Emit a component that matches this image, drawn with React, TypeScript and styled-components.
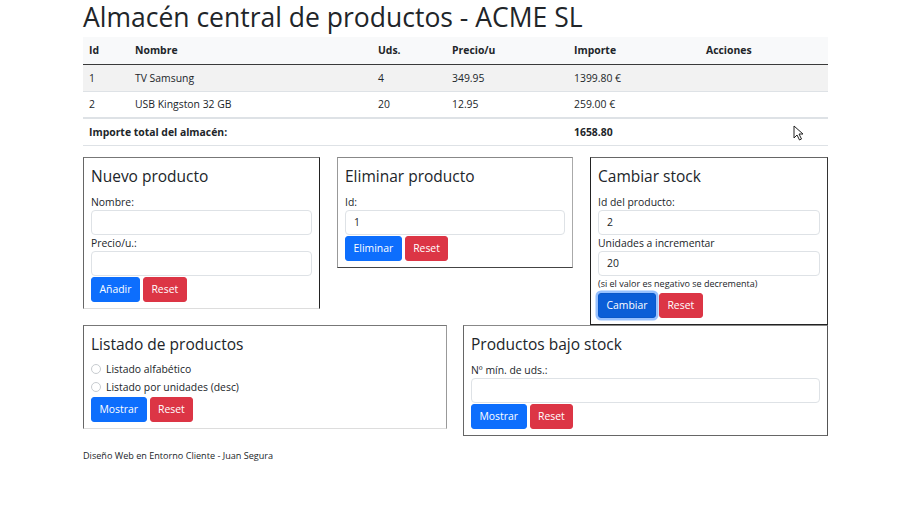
import React from "react";
import styled, { createGlobalStyle } from "styled-components";

const Global = createGlobalStyle`
  html, body { margin: 0; padding: 0; background: #fff; }
  body {
    font-family: "Open Sans", "Noto Sans", sans-serif;
    color: #212529;
    font-size: 10.4px;
  }
  * { box-sizing: border-box; }
`;

const Page = styled.div`
  width: 745px;
  margin: 0 auto;
  position: relative;
`;

const Title = styled.h1`
  font-size: 26.5px;
  font-weight: 500;
  line-height: 32px;
  margin: 1px 0 4px;
  color: #212529;
`;

const TableWrap = styled.div`
  position: relative;
  margin-bottom: 11px;
`;

const Table = styled.table`
  width: 745px;
  border-collapse: collapse;
  table-layout: fixed;
  font-size: 10.4px;
`;

const Th = styled.th`
  height: 27px;
  padding: 0 6px;
  text-align: left;
  font-weight: 700;
  background: #f8f9fa;
  border-bottom: 1px solid #3a3a3a;
`;

const Td = styled.td<{ $bold?: boolean; $striped?: boolean; $thick?: boolean }>`
  height: 27px;
  padding: 0 6px;
  text-align: left;
  font-weight: ${(p) => (p.$bold ? 700 : 400)};
  background: ${(p) => (p.$striped ? "#f2f2f2" : "transparent")};
  border-bottom: ${(p) => (p.$thick ? "2px solid #dee2e6" : "1px solid #dee2e6")};
`;

const Cursor = styled.svg`
  position: absolute;
  left: 710px;
  top: 88px;
`;

const RowOne = styled.div`
  display: grid;
  grid-template-columns: 237px 236px 238px;
  column-gap: 17px;
  align-items: start;
`;

const RowTwo = styled.div`
  display: grid;
  grid-template-columns: 364px 365px;
  column-gap: 16px;
  align-items: start;
`;

const Box = styled.section<{ $edges: string }>`
  border-style: solid;
  border-width: 1px;
  border-color: ${(p) => p.$edges};
  padding: 6px 7px 6px;
`;

const BoxTitle = styled.h5`
  font-size: 15.5px;
  font-weight: 400;
  line-height: 19px;
  margin: 3px 0 8px;
`;

const Label = styled.label`
  display: block;
  line-height: 16px;
  font-size: 10.4px;
`;

const Input = styled.div`
  height: 25px;
  border: 1px solid #dee2e6;
  border-radius: 4px;
  padding: 0 8px;
  display: flex;
  align-items: center;
  font-size: 10.4px;
  background: #fff;
`;

const Note = styled.div`
  font-size: 9px;
  line-height: 16px;
`;

const Buttons = styled.div`
  display: flex;
  gap: 3px;
  margin-top: 1px;
`;

const Button = styled.button<{ $variant: "primary" | "danger" | "active" }>`
  height: 25px;
  padding: 0 7.5px;
  border-radius: 3px;
  font-family: inherit;
  font-size: 10.4px;
  color: #fff;
  border: 1px solid
    ${(p) => (p.$variant === "danger" ? "#dc3545" : p.$variant === "active" ? "#0a58ca" : "#0d6efd")};
  background: ${(p) => (p.$variant === "danger" ? "#dc3545" : p.$variant === "active" ? "#0b5ed7" : "#0d6efd")};
  box-shadow: ${(p) => (p.$variant === "active" ? "0 0 0 2.5px rgba(49,132,253,0.5)" : "none")};
`;

const RadioList = styled.div`
  margin-top: -2px;
`;

const RadioRow = styled.label`
  display: flex;
  align-items: center;
  gap: 5px;
  height: 18px;
  font-size: 10.4px;
`;

const RadioDot = styled.span`
  width: 10px;
  height: 10px;
  border-radius: 50%;
  border: 1px solid #c8ccd0;
  background: #fff;
`;

const Footer = styled.footer`
  font-size: 9.1px;
  line-height: 14px;
  margin-top: 13px;
`;

export default function App() {
  return (
    <>
      <Global />
      <Page>
        <Title>Almacén central de productos - ACME SL</Title>
        <TableWrap>
          <Table>
            <colgroup>
              <col style={{ width: 46 }} />
              <col style={{ width: 243 }} />
              <col style={{ width: 74 }} />
              <col style={{ width: 122 }} />
              <col style={{ width: 132 }} />
              <col style={{ width: 128 }} />
            </colgroup>
            <thead>
              <tr>
                <Th>Id</Th>
                <Th>Nombre</Th>
                <Th>Uds.</Th>
                <Th>Precio/u</Th>
                <Th>Importe</Th>
                <Th>Acciones</Th>
              </tr>
            </thead>
            <tbody>
              <tr>
                <Td $striped>1</Td>
                <Td $striped>TV Samsung</Td>
                <Td $striped>4</Td>
                <Td $striped>349.95</Td>
                <Td $striped>1399.80 €</Td>
                <Td $striped></Td>
              </tr>
              <tr>
                <Td $thick>2</Td>
                <Td $thick>USB Kingston 32 GB</Td>
                <Td $thick>20</Td>
                <Td $thick>12.95</Td>
                <Td $thick>259.00 €</Td>
                <Td $thick></Td>
              </tr>
            </tbody>
            <tfoot>
              <tr>
                <Td $bold colSpan={4}>Importe total del almacén:</Td>
                <Td $bold>1658.80</Td>
                <Td></Td>
              </tr>
            </tfoot>
          </Table>
          <Cursor width="12" height="16" viewBox="0 0 12 16">
            <path d="M1 1 L1 13 L4 10 L6.5 15 L8.5 14 L6 9 L10 9 Z" fill="#fff" stroke="#222" strokeWidth="1" strokeLinejoin="round" />
          </Cursor>
        </TableWrap>

        <RowOne>
          <Box $edges="#777 #222 #ddd #666">
            <BoxTitle>Nuevo producto</BoxTitle>
            <Label>Nombre:</Label>
            <Input />
            <Label>Precio/u.:</Label>
            <Input />
            <Buttons>
              <Button $variant="primary">Añadir</Button>
              <Button $variant="danger">Reset</Button>
            </Buttons>
          </Box>
          <Box $edges="#888 #aaa #444 #999">
            <BoxTitle>Eliminar producto</BoxTitle>
            <Label>Id:</Label>
            <Input>1</Input>
            <Buttons>
              <Button $variant="primary">Eliminar</Button>
              <Button $variant="danger">Reset</Button>
            </Buttons>
          </Box>
          <Box $edges="#666 #333 #222 #222">
            <BoxTitle>Cambiar stock</BoxTitle>
            <Label>Id del producto:</Label>
            <Input>2</Input>
            <Label>Unidades a incrementar</Label>
            <Input>20</Input>
            <Note>(si el valor es negativo se decrementa)</Note>
            <Buttons>
              <Button $variant="active">Cambiar</Button>
              <Button $variant="danger">Reset</Button>
            </Buttons>
          </Box>
        </RowOne>

        <RowTwo>
          <Box $edges="#777 #999 #ddd #666">
            <BoxTitle>Listado de productos</BoxTitle>
            <RadioList>
              <RadioRow>
                <RadioDot />
                Listado alfabético
              </RadioRow>
              <RadioRow>
                <RadioDot />
                Listado por unidades (desc)
              </RadioRow>
            </RadioList>
            <Buttons>
              <Button $variant="primary">Mostrar</Button>
              <Button $variant="danger">Reset</Button>
            </Buttons>
          </Box>
          <Box $edges="#888 #555 #666 #666">
            <BoxTitle>Productos bajo stock</BoxTitle>
            <Label>Nº mín. de uds.:</Label>
            <Input />
            <Buttons>
              <Button $variant="primary">Mostrar</Button>
              <Button $variant="danger">Reset</Button>
            </Buttons>
          </Box>
        </RowTwo>

        <Footer>Diseño Web en Entorno Cliente - Juan Segura</Footer>
      </Page>
    </>
  );
}
